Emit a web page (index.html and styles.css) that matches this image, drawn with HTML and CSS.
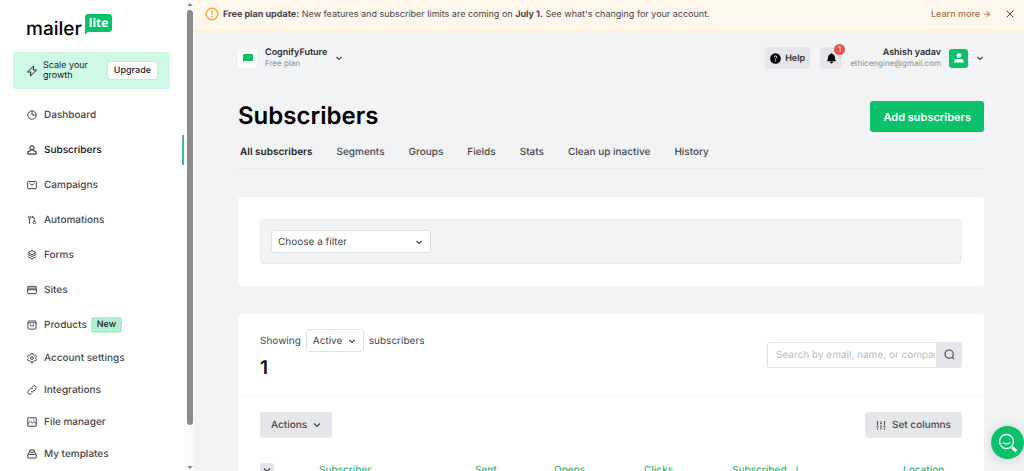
FILE: index.html
```html
<!DOCTYPE html>
<html lang="en">
<head>
  <meta charset="UTF-8" />
  <meta name="viewport" content="width=device-width, initial-scale=1.0"/>
  <title>Subscribers | MailerLite</title>
  <link rel="stylesheet" href="styles.css">
</head>
<body>
  <div class="app">
    <aside class="sidebar">
      <div class="sidebar-content">
        <a class="logo" href="#">
          <span class="logo-name">mailer</span>
          <span class="logo-tag">lite</span>
        </a>

        <div class="promo">
          <svg class="bolt" viewBox="0 0 12 12"><path d="M7.600 1 1.400 7h3.400L4.400 11l6.200-6H7.200z"/></svg>
          <span class="promo-text">Scale your growth</span>
          <button type="button" class="upgrade">Upgrade</button>
        </div>

        <nav class="menu">
          <a href="#"><svg class="icon" viewBox="0 0 12 12"><circle cx="6" cy="6" r="5"/><path d="M6 1v5h5"/></svg>Dashboard</a>
          <a href="#" class="active"><svg class="icon" viewBox="0 0 12 12"><circle cx="6" cy="3.400" r="2.500"/><path d="M4.600 5.600v1L1 8v2.800h10V8L7.400 6.600v-1"/></svg>Subscribers</a>
          <a href="#"><svg class="icon" viewBox="0 0 12 12"><rect x=".8" y="1.800" width="10.400" height="8.600" rx=".6"/><path d="M3 4 6 6.300 9 4"/></svg>Campaigns</a>
          <a href="#"><svg class="icon" viewBox="0 0 12 12"><circle cx="3" cy="3" r="1.500"/><path d="M3 4.500v6M5.800 2.400h1.600q1.400 0 1.400 1.400v3.800M7 1 5.800 2.400 7 3.800"/><circle cx="8.800" cy="9" r="1.500"/></svg>Automations</a>
          <a href="#"><svg class="icon" viewBox="0 0 12 12"><path d="M6 .8 1 3.200l5 2.400 5-2.400zM1 5.400l5 2.400 5-2.400M1 8l5 2.800L11 8"/></svg>Forms</a>
          <a href="#"><svg class="icon" viewBox="0 0 12 12"><rect x=".8" y="1.600" width="10.400" height="8.800" rx=".6"/><path d="M.8 5.600h10.400M.8 3.700h10.400"/></svg>Sites</a>
          <a href="#"><svg class="icon" viewBox="0 0 12 12"><rect x="1.200" y="1.200" width="9.600" height="9.800" rx="1"/><path d="M1.200 3.400h9.600M3.800 5.200q0 2.200 2.200 2.200t2.200-2.200"/></svg>Products<span class="tag">New</span></a>
        </nav>
        <nav class="menu menu-small">
          <a href="#"><svg class="icon" viewBox="0 0 12 12"><path d="M4.800.8h2.400l.4 1.400 1.300.8 1.400-.4 1.200 2-1 1v1l1 1-1.200 2-1.400-.4-1.300.8-.4 1.400H4.800L4.400 10l-1.300-.8-1.400.4-1.200-2 1-1v-1l-1-1 1.200-2 1.400.4 1.300-.8z"/><circle cx="6" cy="6.100" r="1.700"/></svg>Account settings</a>
          <a href="#"><svg class="icon" viewBox="0 0 12 12"><path d="M4.800 7.200a2.400 2.400 0 0 0 3.400 0l2.200-2.200a2.400 2.400 0 0 0-3.400-3.400L5.800 2.800M7.200 4.800a2.400 2.400 0 0 0-3.400 0L1.600 7a2.400 2.400 0 0 0 3.400 3.400l1.200-1.200"/></svg>Integrations</a>
          <a href="#"><svg class="icon" viewBox="0 0 12 12"><rect x=".9" y=".9" width="10.200" height="10.200" rx=".6"/><path d="M1 8l3.200-3 2.300 2.200 1.800-1.600L11 8M7.400 3.400h1.400"/></svg>File manager</a>
          <a href="#"><svg class="icon" viewBox="0 0 12 12"><rect x=".9" y="6.600" width="10.200" height="4.400" rx=".6"/><path d="M1.200 6.600 2.600 4h6.800l1.400 2.600M3.200 4V1.200h5.600V4"/></svg>My templates</a>
        </nav>
      </div>
      <div class="scrollbar">
        <span class="arrow-up"></span>
        <span class="thumb"></span>
        <span class="arrow-down"></span>
      </div>
    </aside>

    <div class="page">
      <div class="banner">
        <svg class="banner-icon" viewBox="0 0 14 14"><circle cx="7" cy="7" r="5.800"/><path d="M7 3.600v4M7 9v1.400"/></svg>
        <p><strong>Free plan update:</strong> New features and subscriber limits are coming on <strong>July 1.</strong> See what's changing for your account.</p>
        <a href="#">Learn more →</a>
        <button type="button" class="close" aria-label="Close">
          <svg viewBox="0 0 10 10"><path d="m1.500 1.500 7 7M8.500 1.500l-7 7"/></svg>
        </button>
      </div>

      <main class="container">
        <header class="topbar">
          <button type="button" class="account">
            <span class="account-logo"><svg viewBox="0 0 10 8"><path d="M1 0h8q1 0 1 1v5q0 1-1 1H1.500L0 8V1q0-1 1-1z"/></svg></span>
            <span class="two-lines"><strong>CognifyFuture</strong><small>Free plan</small></span>
            <svg class="chevron" viewBox="0 0 8 8"><path d="m1.500 3 2.500 2.500L6.500 3"/></svg>
          </button>
          <button type="button" class="help">
            <svg viewBox="0 0 12 12"><circle cx="6" cy="6" r="5.800"/><path class="mark" d="M4.500 4.700q0-1.500 1.500-1.500t1.500 1.300Q7.500 5.400 6 6v.9M6 8v1.100"/></svg>
            Help
          </button>
          <button type="button" class="bell" aria-label="Notifications">
            <svg viewBox="0 0 12 12"><path d="M6 .4q.8 0 .8.8 2.900.6 2.900 3.800 0 2.600 1.600 4H.7q1.600-1.400 1.600-4 0-3.200 2.900-3.800 0-.8.8-.8zM4.400 9.600h3.200q0 1.800-1.600 1.800T4.400 9.600z"/></svg>
            <span class="count">1</span>
          </button>
          <button type="button" class="user">
            <span class="two-lines"><strong>Ashish yadav</strong><small>ethicengine@gmail.com</small></span>
            <span class="avatar"><svg viewBox="0 0 10 10"><circle cx="5" cy="2.600" r="2.400"/><path d="M.4 9.600V8.300Q.4 6 3 6h4q2.600 0 2.600 2.300v1.300z"/></svg></span>
            <svg class="chevron" viewBox="0 0 8 8"><path d="m1.500 3 2.500 2.500L6.500 3"/></svg>
          </button>
        </header>

        <div class="title-row">
          <h1>Subscribers</h1>
          <button type="button" class="primary">Add subscribers</button>
        </div>

        <nav class="tabs">
          <a href="#" class="active">All subscribers</a>
          <a href="#">Segments</a>
          <a href="#">Groups</a>
          <a href="#">Fields</a>
          <a href="#">Stats</a>
          <a href="#">Clean up inactive</a>
          <a href="#">History</a>
        </nav>

        <section class="card filter-card">
          <div class="filter-box">
            <select class="filter-select" aria-label="Filter">
              <option>Choose a filter</option>
            </select>
          </div>
        </section>

        <section class="card">
          <div class="summary">
            <div>
              <div class="showing">
                <label for="status">Showing</label>
                <select id="status">
                  <option>Active</option>
                </select>
                <span>subscribers</span>
              </div>
              <div class="total">1</div>
            </div>
            <form class="search">
              <input type="text" aria-label="Search" placeholder="Search by email, name, or company" />
              <button type="submit" aria-label="Search">
                <svg viewBox="0 0 12 12"><circle cx="5.600" cy="5.600" r="4.500"/><path d="m8.800 8.800 2.200 2.200"/></svg>
              </button>
            </form>
          </div>

          <div class="toolbar">
            <button type="button" class="secondary">
              Actions
              <svg class="chevron" viewBox="0 0 8 8"><path d="m1 2.500 3 3 3-3"/></svg>
            </button>
            <button type="button" class="secondary">
              <svg class="sliders" viewBox="0 0 10 10"><path d="M1.500 1v4.500M1.500 8v1.500M5 1v1.500M5 5v4.500M8.500 1v4.500M8.500 8v1.500M.5 6.700h2M4 3.700h2M7.500 6.700h2"/></svg>
              Set columns
            </button>
          </div>

          <table class="subscribers">
            <thead>
              <tr>
                <th class="col-check"><button type="button" class="check" aria-label="Select"><svg class="chevron" viewBox="0 0 8 8"><path d="m1 2.500 3 3 3-3"/></svg></button></th>
                <th class="col-name">Subscriber</th>
                <th class="col-sent">Sent</th>
                <th class="col-opens">Opens</th>
                <th class="col-clicks">Clicks</th>
                <th class="col-date">Subscribed <svg class="sort" viewBox="0 0 8 10"><path d="M4 1v8M1 6l3 3 3-3"/></svg></th>
                <th>Location</th>
              </tr>
            </thead>
          </table>
        </section>
      </main>
    </div>
  </div>

  <button type="button" class="beacon" aria-label="Search help">
    <svg viewBox="0 0 20 20"><circle cx="8.500" cy="8.500" r="7"/><path d="M5 9.500q3.500 2.800 7 0"/><path class="handle" d="m14.200 14.200 4 4"/></svg>
  </button>
</body>
</html>
```

FILE: styles.css
```css
* {
  box-sizing: border-box;
}
body {
  margin: 0;
  font-family: Inter, "Liberation Sans", sans-serif;
  font-size: 10px;
  color: #45474b;
  background: #f2f3f5;
  text-rendering: geometricPrecision;
}
a {
  color: inherit;
  text-decoration: none;
}
button, input, select {
  font: inherit;
  color: inherit;
  border: none;
  margin: 0;
  text-rendering: inherit;
}
button {
  cursor: pointer;
  background: none;
  padding: 0;
}
svg {
  flex: none;
  display: block;
  fill: none;
  stroke: currentColor;
  stroke-width: 1;
}
.app {
  display: flex;
  height: 100vh;
  overflow: hidden;
}

/* sidebar */
.sidebar {
  display: flex;
  flex: none;
  width: 194px;
  background: #fff;
}
.sidebar-content {
  flex: 1;
  overflow: hidden;
}
.logo {
  display: flex;
  gap: 3px;
  height: 38px;
  margin-left: 26px;
  padding-top: 14px;
  color: #000;
}
.logo-name {
  font-size: 19px;
  font-weight: 500;
  line-height: 29px;
}
.logo-tag {
  position: relative;
  height: 18px;
  padding: 0 4px;
  border-radius: 3px 3px 3px 0;
  background: #09c269;
  color: #fff;
  font-family: "Open Sans", sans-serif;
  font-size: 12px;
  font-weight: 700;
  line-height: 18px;
}
.logo-tag::after {
  content: "";
  position: absolute;
  left: 0;
  top: 17px;
  border-top: 4px solid #09c269;
  border-right: 4px solid transparent;
}
.icon {
  width: 10px;
  height: 10px;
  stroke-width: 1.2;
}
.bolt {
  width: 12px;
  height: 12px;
}
.promo {
  display: flex;
  align-items: center;
  gap: 5px;
  height: 37px;
  margin: 14px 15px 8px 13px;
  padding: 0 13px;
  border-radius: 3px;
  background: #cef9e4;
  color: #222;
  font-size: 9px;
}
.promo-text {
  width: 50px;
  margin-right: auto;
  line-height: 10px;
}
.upgrade {
  height: 17px;
  padding: 0 6px;
  border-radius: 3px;
  background: #fff;
  font-weight: 500;
  box-shadow: 0 0 0 1px #c2ecd9;
}
.menu a {
  display: flex;
  align-items: center;
  gap: 7px;
  height: 35px;
  padding-left: 27px;
  font-weight: 500;
}
.menu a.active {
  color: #111;
  background: linear-gradient(#3fb984, #3fb984) right 1px center / 2px 30px no-repeat;
}
.menu-small a {
  height: 32px;
}
.tag {
  padding: 0 6px;
  border-radius: 3px;
  background: #b2edd1;
  color: #222;
  font-size: 9px;
  line-height: 16px;
}
.menu .tag {
  margin-left: -3px;
}
.scrollbar {
  display: flex;
  flex-direction: column;
  align-items: center;
  width: 9px;
  padding: 3px 0 2px;
  background: #fcfcfc;
}
.arrow-up, .arrow-down {
  border: 3px solid transparent;
}
.arrow-up {
  border-top: none;
  border-bottom-color: #8b8b8b;
}
.arrow-down {
  margin-top: auto;
  border-bottom: none;
  border-top-color: #8b8b8b;
}
.thumb {
  width: 6px;
  height: 89%;
  margin-top: 4px;
  border-radius: 3px;
  background: #8b8b8b;
}

/* banner */
.page {
  flex: 1;
  min-width: 0;
  overflow: hidden;
}
.banner {
  display: flex;
  align-items: center;
  height: 31px;
  padding: 0 9px 2px 11px;
  border-bottom: 1px solid #fcecd0;
  background: #fff6ec;
  font-size: 9px;
}
.banner-icon {
  width: 14px;
  height: 14px;
  color: #f3ae3d;
  stroke-width: 1.4;
}
.banner p {
  flex: 1;
  margin: 0 0 0 4px;
}
.banner a {
  color: #a5744a;
  font-weight: 500;
}
.close {
  margin-left: 14px;
}
.close svg {
  width: 10px;
  height: 10px;
}

/* top bar */
.container {
  padding: 15px 40px 0 44px;
}
.topbar {
  display: flex;
  align-items: center;
  height: 24px;
}
.account, .user, .help, .bell {
  display: flex;
  align-items: center;
}
.account {
  margin-right: auto;
  text-align: left;
}
.account-logo, .avatar {
  display: flex;
  align-items: center;
  justify-content: center;
  width: 19px;
  height: 19px;
  border-radius: 3px;
  background: #fff;
}
.account-logo svg {
  width: 10px;
  height: 8px;
  fill: #09c269;
  stroke: none;
}
.two-lines {
  display: flex;
  flex-direction: column;
  margin: 0 8px;
  font-size: 9px;
  line-height: 11px;
}
.two-lines strong {
  color: #2b2c2f;
  font-weight: 600;
}
.two-lines small {
  color: #8b8d91;
  font-size: 8px;
}
.chevron {
  width: 8px;
  height: 8px;
  stroke-width: 1.2;
}
.help, .bell {
  height: 22px;
  border-radius: 3px;
  background: #e4e6ea;
  color: #000;
}
.help {
  gap: 4px;
  padding: 0 5px;
  font-size: 9px;
  font-weight: 600;
  color: #333;
}
.help svg, .bell svg {
  width: 11px;
  height: 11px;
  fill: #000;
  stroke: none;
}
.help .mark {
  fill: none;
  stroke: #fff;
}
.bell {
  position: relative;
  justify-content: center;
  width: 22px;
  margin-left: 10px;
}
.count {
  position: absolute;
  top: -3px;
  right: -3px;
  width: 11px;
  height: 11px;
  border-radius: 50%;
  background: #f04f4f;
  color: #fff;
  font-size: 8px;
  line-height: 11px;
}
.user {
  text-align: right;
}
.avatar {
  margin-right: 8px;
  background: #09c269;
}
.avatar svg {
  width: 10px;
  height: 10px;
  fill: #fff;
  stroke: none;
}

/* title and tabs */
.title-row {
  display: flex;
  align-items: center;
  justify-content: space-between;
  margin-top: 31px;
}
h1 {
  margin: 0;
  padding-bottom: 2px;
  color: #000;
  font-size: 24px;
  font-weight: 600;
  line-height: 29px;
}
.primary {
  height: 31px;
  padding: 0 13px;
  border-radius: 3px;
  background: #09c269;
  color: #fff;
  font-size: 11px;
  font-weight: 600;
}
.tabs {
  display: flex;
  gap: 24px;
  height: 37px;
  padding-left: 2px;
  border-bottom: 1px solid #ebecef;
  font-weight: 500;
  line-height: 40px;
  white-space: nowrap;
}
.tabs .active {
  color: #222;
  font-weight: 600;
}

/* cards */
.card {
  margin-top: 28px;
  border-radius: 4px;
  background: #fff;
}
.filter-card {
  padding: 22px;
}
.filter-box {
  display: flex;
  padding: 10px;
  border: 1px solid #ebecef;
  border-radius: 4px;
  background: #f2f3f5;
}
select {
  appearance: none;
  height: 23px;
  padding: 0 20px 0 6px;
  border: 1px solid #dfe2e6;
  border-radius: 3px;
  background: #fff url("data:image/svg+xml,%3Csvg xmlns='http://www.w3.org/2000/svg' viewBox='0 0 8 8'%3E%3Cpath d='M1.500 3 4 5.500 6.500 3' fill='none' stroke='%2345474b' stroke-width='1.2'/%3E%3C/svg%3E") right 7px center / 8px 8px no-repeat;
}
.filter-select {
  width: 160px;
}
.summary {
  display: flex;
  align-items: center;
  justify-content: space-between;
  padding: 15px 22px;
  border-bottom: 1px solid #f6f6f8;
}
.showing {
  display: flex;
  align-items: center;
  gap: 5px;
}
.total {
  margin-top: 3px;
  color: #111;
  font-size: 19px;
  font-weight: 600;
  line-height: 25px;
}
.search {
  display: flex;
  width: 195px;
  height: 26px;
}
.search input {
  flex: 1;
  min-width: 0;
  padding: 0 1px 0 8px;
  border: 1px solid #dfe2e6;
  border-right: none;
  border-radius: 3px 0 0 3px;
  background: #fff;
}
.search input::placeholder {
  color: #b9bbbf;
}
.search button {
  display: flex;
  align-items: center;
  justify-content: center;
  width: 26px;
  border-radius: 0 3px 3px 0;
  background: #e4e6ea;
}
.search svg {
  width: 11px;
  height: 11px;
  stroke-width: 1.2;
}
.toolbar {
  display: flex;
  justify-content: space-between;
  padding: 16px 22px 24px;
}
.secondary {
  display: flex;
  align-items: center;
  gap: 6px;
  height: 26px;
  padding: 0 11px;
  border-radius: 3px;
  background: #e4e6ea;
  font-weight: 500;
}
.sliders {
  width: 10px;
  height: 10px;
}
.subscribers {
  width: 100%;
  padding-left: 22px;
  border-spacing: 0;
  table-layout: fixed;
  color: #3aae78;
}
.subscribers th {
  padding: 0;
  font-weight: 500;
  line-height: 16px;
  text-align: left;
  white-space: nowrap;
}
.col-check {
  width: 59px;
}
.col-name {
  width: 156px;
}
.col-sent {
  width: 79px;
}
.col-opens {
  width: 90px;
}
.col-clicks {
  width: 88px;
}
.col-date {
  width: 171px;
}
.check {
  display: flex;
  align-items: center;
  justify-content: center;
  width: 14px;
  height: 14px;
  border-radius: 2px;
  background: #e4e6ea;
  color: #45474b;
}
.sort {
  display: inline-block;
  width: 8px;
  height: 10px;
  margin-left: 4px;
  vertical-align: middle;
}

.beacon {
  position: fixed;
  right: 0;
  bottom: 12px;
  display: flex;
  align-items: center;
  justify-content: center;
  width: 33px;
  height: 33px;
  border-radius: 50%;
  background: #09c269;
  color: #fff;
  box-shadow: 0 1px 12px rgba(0,0,0,0.15);
}
.beacon svg {
  width: 20px;
  height: 20px;
  stroke-width: 1.4;
}
.beacon .handle {
  stroke-width: 3;
}
```
